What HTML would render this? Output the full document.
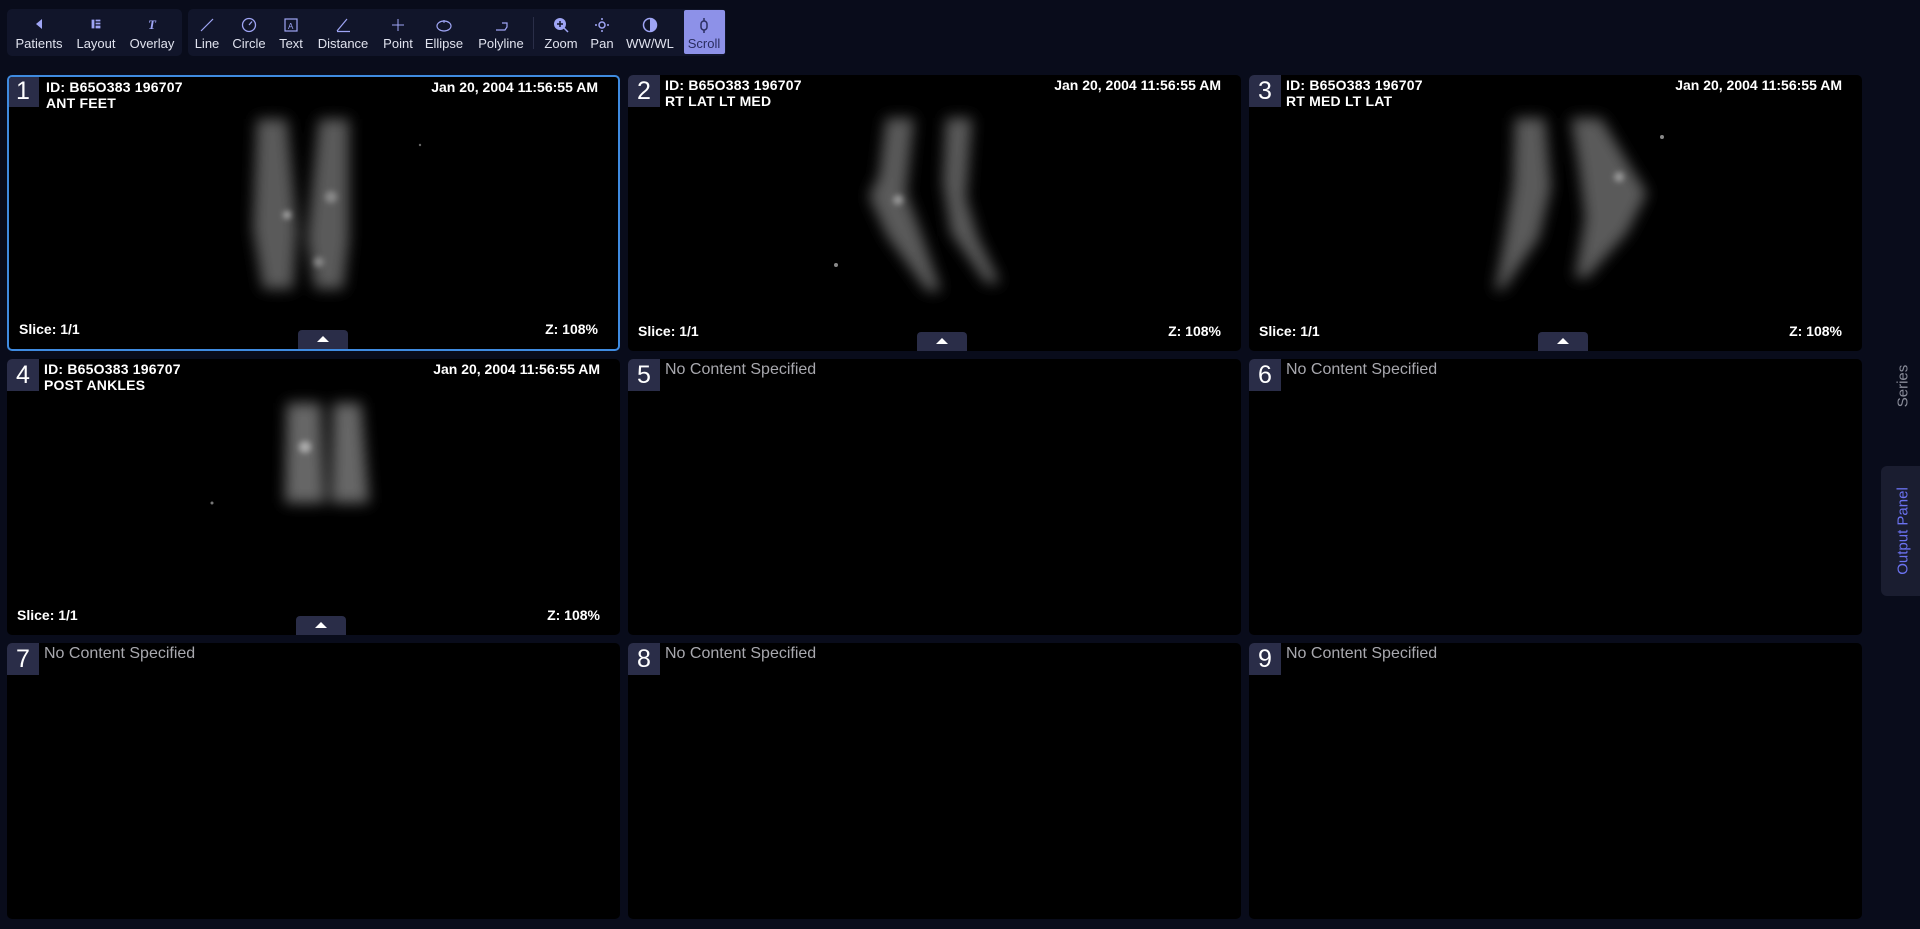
<!DOCTYPE html>
<html><head><meta charset="utf-8"><style>
*{box-sizing:border-box;margin:0;padding:0}
body{width:1920px;height:929px;background:#090c1b;overflow:hidden;font-family:"Liberation Sans",sans-serif;position:relative;color:#fff}
.grp{position:absolute;top:9px;height:47px;background:#11152a;border-radius:5px}
.tb{position:absolute;top:9px;height:47px;width:60px;margin-left:-30px;text-align:center}
.tb svg{position:absolute;left:50%;top:8px;transform:translateX(-50%)}
.tb span{position:absolute;left:0;right:0;top:27px;font-size:13px;color:#e0e2ee;white-space:nowrap}
.vp{position:absolute;width:613px;height:276px;background:#000;border-radius:5px;overflow:hidden}
.vp.act{border:2px solid #3f8be0}
.num{position:absolute;left:0;top:0;width:32px;height:32px;background:#2a2d48;color:#fff;font-size:25px;text-align:center;line-height:32px}
.act .num{left:-2px;top:-2px}
.id{position:absolute;left:37px;top:2px;font-size:14px;font-weight:bold;line-height:16px;letter-spacing:.2px}
.dt{position:absolute;right:20px;top:2px;font-size:14px;font-weight:bold}
.sl{position:absolute;left:10px;bottom:12px;font-size:14px;font-weight:bold}
.z{position:absolute;right:20px;bottom:12px;font-size:14px;font-weight:bold}
.tab{position:absolute;left:289px;bottom:0;width:50px;height:19px;background:#2a2d48;border-radius:4px 4px 0 0}
.tab:after{content:"";position:absolute;left:19px;top:6px;border-left:6px solid transparent;border-right:6px solid transparent;border-bottom:6px solid #fff}
.nc{position:absolute;left:37px;top:2px;font-size:16px;color:#a8a8ae}
</style></head><body>
<div class="grp" style="left:7px;width:175px"></div>
<div class="grp" style="left:188px;width:538px"></div>
<div style="position:absolute;left:533px;top:17px;width:1px;height:32px;background:#2a2e48"></div>
<div style="position:absolute;left:684px;top:10px;width:41px;height:44px;background:#8d91e8;border-radius:2px"></div>

<div class="tb" style="left:39px"><svg width="14" height="14"><path d="M10 2 L4 7 L10 12Z" fill="#9fa5f5"/></svg><span>Patients</span></div>
<div class="tb" style="left:96px"><svg width="14" height="14"><path d="M2 2h10v10H2z M6 2v10 M6 5h6 M6 8h6" fill="#9fa5f5" stroke="#11152a" stroke-width="1.2"/></svg><span>Layout</span></div>
<div class="tb" style="left:152px"><svg width="14" height="14"><text x="3" y="12" font-size="13" font-style="italic" font-weight="bold" fill="#9fa5f5" font-family="Liberation Serif">T</text></svg><span>Overlay</span></div>
<div class="tb" style="left:207px"><svg width="16" height="16"><path d="M2 14L14 2" stroke="#9fa5f5" stroke-width="1.2"/></svg><span>Line</span></div>
<div class="tb" style="left:249px"><svg width="16" height="16"><circle cx="8" cy="8" r="6.5" fill="none" stroke="#9fa5f5" stroke-width="1.3"/><path d="M8 8L11 4.5" stroke="#9fa5f5" stroke-width="1.3"/></svg><span>Circle</span></div>
<div class="tb" style="left:291px"><svg width="16" height="16"><rect x="2" y="2" width="12" height="12" fill="none" stroke="#9fa5f5" stroke-width="1.2"/><text x="5" y="12" font-size="8" fill="#9fa5f5">A</text></svg><span>Text</span></div>
<div class="tb" style="left:343px"><svg width="16" height="16"><path d="M2 14L12 2 M2 14.5H15" stroke="#9fa5f5" stroke-width="1.2"/></svg><span>Distance</span></div>
<div class="tb" style="left:398px"><svg width="16" height="16"><path d="M8 2v12 M2 8h12" stroke="#9fa5f5" stroke-width="1"/></svg><span>Point</span></div>
<div class="tb" style="left:444px"><svg width="18" height="16"><ellipse cx="9" cy="9" rx="7" ry="5" fill="none" stroke="#9fa5f5" stroke-width="1.2"/><path d="M9 3v3" stroke="#9fa5f5"/></svg><span>Ellipse</span></div>
<div class="tb" style="left:501px"><svg width="16" height="16"><path d="M3 13h9l2-3V6H9" fill="none" stroke="#9fa5f5" stroke-width="1.2"/></svg><span>Polyline</span></div>
<div class="tb" style="left:561px"><svg width="16" height="16"><circle cx="7" cy="7" r="6" fill="#9fa5f5"/><path d="M7 4v6M4 7h6" stroke="#11152a" stroke-width="1.5"/><path d="M11 11l4 4" stroke="#9fa5f5" stroke-width="1.5"/></svg><span>Zoom</span></div>
<div class="tb" style="left:602px"><svg width="16" height="16"><circle cx="8" cy="8" r="3" fill="none" stroke="#9fa5f5" stroke-width="1.5"/><path d="M8 1v2M8 13v2M1 8h2M13 8h2" stroke="#9fa5f5" stroke-width="1.5"/></svg><span>Pan</span></div>
<div class="tb" style="left:650px"><svg width="16" height="16"><circle cx="8" cy="8" r="6.5" fill="none" stroke="#9fa5f5" stroke-width="1.5"/><path d="M8 1.5a6.5 6.5 0 0 1 0 13z" fill="#9fa5f5"/></svg><span>WW/WL</span></div>
<div class="tb" style="left:704px"><svg width="16" height="16"><rect x="5" y="4" width="6" height="9" rx="3" fill="none" stroke="#2a2d60" stroke-width="1.5"/><path d="M8 1v3M8 13v3" stroke="#2a2d60" stroke-width="1.5"/></svg><span style="color:#2a2d60">Scroll</span></div>

<svg width="0" height="0" style="position:absolute"><defs><filter id="b" x="-50%" y="-50%" width="200%" height="200%"><feGaussianBlur stdDeviation="7"/></filter><filter id="b2" x="-100%" y="-100%" width="300%" height="300%"><feGaussianBlur stdDeviation="3"/></filter></defs></svg>

<div class="vp act" style="left:7px;top:75px">
<svg style="position:absolute;left:0;top:0" width="613" height="276"><g filter="url(#b)" fill="#5a5a5a"><path d="M248 42h30l10 110-4 60h-30l-10-60z"/><path d="M310 42h30l0 120-6 50h-28l-8-50z"/></g><g filter="url(#b2)" fill="#aaa"><circle cx="278" cy="138" r="4"/><circle cx="322" cy="120" r="6" fill="#888"/><circle cx="310" cy="185" r="5" fill="#888"/></g><circle cx="411" cy="68" r="1.2" fill="#666"/></svg>
<div class="num">1</div><div class="id">ID: B65O383 196707<br>ANT FEET</div><div class="dt">Jan 20, 2004 11:56:55 AM</div><div class="sl">Slice: 1/1</div><div class="z">Z: 108%</div><div class="tab"></div></div>

<div class="vp" style="left:628px;top:75px">
<svg style="position:absolute;left:0;top:0" width="613" height="276"><g filter="url(#b)" fill="#5a5a5a"><path d="M258 43h28l-8 75 15 40 20 58-14 0-40-55-18-40 10-20z"/><path d="M318 43h26l-6 80 12 40 22 45-14 0-35-50-8-50z"/></g><circle cx="270" cy="125" r="5" fill="#999" filter="url(#b2)"/><circle cx="208" cy="190" r="2" fill="#888"/></svg>
<div class="num">2</div><div class="id">ID: B65O383 196707<br>RT LAT LT MED</div><div class="dt">Jan 20, 2004 11:56:55 AM</div><div class="sl">Slice: 1/1</div><div class="z">Z: 108%</div><div class="tab"></div></div>

<div class="vp" style="left:1249px;top:75px">
<svg style="position:absolute;left:0;top:0" width="613" height="276"><g filter="url(#b)" fill="#5a5a5a"><path d="M266 43h30l6 70-12 50-36 52-8 0 10-55 8-50z"/><path d="M322 43h30l30 50 16 25-20 40-40 45-12 0 10-60-6-50z"/></g><circle cx="370" cy="102" r="5" fill="#999" filter="url(#b2)"/><circle cx="413" cy="62" r="2" fill="#888"/></svg>
<div class="num">3</div><div class="id">ID: B65O383 196707<br>RT MED LT LAT</div><div class="dt">Jan 20, 2004 11:56:55 AM</div><div class="sl">Slice: 1/1</div><div class="z">Z: 108%</div><div class="tab"></div></div>

<div class="vp" style="left:7px;top:359px">
<svg style="position:absolute;left:0;top:0" width="613" height="276"><g filter="url(#b)" fill="#666"><path d="M280 44h34l4 100h-40z"/><path d="M326 44h28l8 100h-38z"/></g><circle cx="298" cy="88" r="6" fill="#aaa" filter="url(#b2)"/><circle cx="205" cy="144" r="1.5" fill="#777"/></svg>
<div class="num">4</div><div class="id">ID: B65O383 196707<br>POST ANKLES</div><div class="dt">Jan 20, 2004 11:56:55 AM</div><div class="sl">Slice: 1/1</div><div class="z">Z: 108%</div><div class="tab"></div></div>

<div class="vp" style="left:628px;top:359px"><div class="num">5</div><div class="nc">No Content Specified</div></div>
<div class="vp" style="left:1249px;top:359px"><div class="num">6</div><div class="nc">No Content Specified</div></div>
<div class="vp" style="left:7px;top:643px"><div class="num">7</div><div class="nc">No Content Specified</div></div>
<div class="vp" style="left:628px;top:643px"><div class="num">8</div><div class="nc">No Content Specified</div></div>
<div class="vp" style="left:1249px;top:643px"><div class="num">9</div><div class="nc">No Content Specified</div></div>

<div style="position:absolute;left:1903px;top:386px;transform:translate(-50%,-50%) rotate(-90deg);font-size:15px;color:#8a8d9a;white-space:nowrap">Series</div>
<div style="position:absolute;left:1881px;top:466px;width:45px;height:130px;background:#1a1d30;border-radius:6px"></div>
<div style="position:absolute;left:1903px;top:531px;transform:translate(-50%,-50%) rotate(-90deg);font-size:15px;color:#6b72f0;white-space:nowrap">Output Panel</div>
</body></html>
